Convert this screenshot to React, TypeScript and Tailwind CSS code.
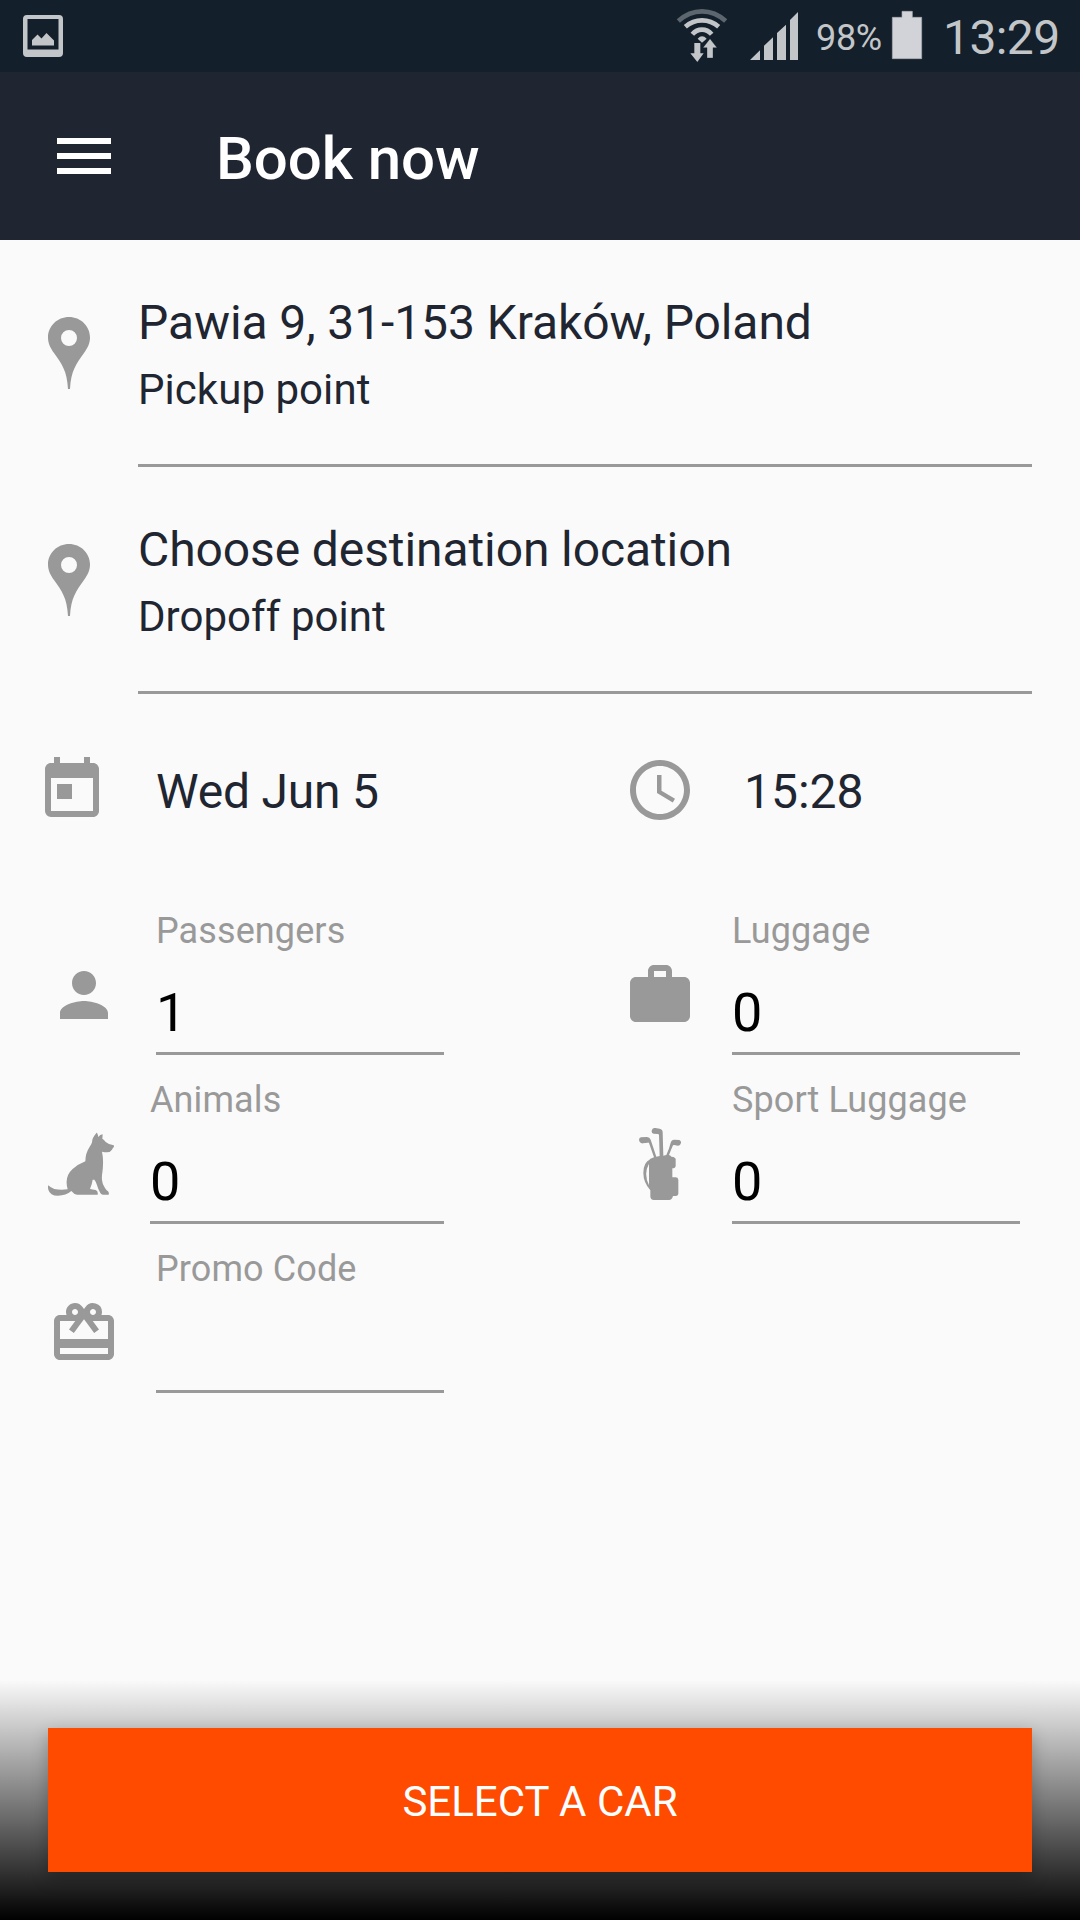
import type { ReactNode } from 'react';
import { MdMenu, MdPerson, MdRedeem, MdSchedule, MdToday, MdWork } from 'react-icons/md';

function ScreenshotIcon() {
  return (
    <svg width="42" height="72" viewBox="0 0 42 72" fill="#c3c6c9">
      <path
        fillRule="evenodd"
        d="M5 15h32a4 4 0 0 1 4 4v34a4 4 0 0 1-4 4H5a4 4 0 0 1-4-4V19a4 4 0 0 1 4-4zM5.500 19v30.500h31V19z"
      />
      <path d="M10 45.500v-5.500l5.500-5.500 4 4 5-5.500 7.500 7.500v5z" />
    </svg>
  );
}

function WifiIcon() {
  return (
    <svg width="52" height="72" viewBox="48 0 156 216">
      <g fill="none" stroke="#c3c6c9" strokeWidth="14">
        <path d="M55 63Q87 34 126 34t71 29" stroke="#5c666e" />
        <path d="M76 80Q98 61 126 61t50 19" />
        <path d="M97 103Q109 89 126 89t29 14" />
      </g>
      <g fill="#c3c6c9">
        <path d="M113 116q13-14 27 0l-14 12z" />
        <path d="M103 129h18v31h10l-19 26-21-26h12z" />
        <path d="M150 116l21 27h-12v31h-18v-31h-12z" stroke="#131f2a" strokeWidth="1" />
      </g>
    </svg>
  );
}

function SignalIcon() {
  return (
    <svg width="52" height="72" viewBox="264 0 156 216" fill="#c3c6c9">
      <path d="M270 180l30-29v29zM312 180v-43l27-25v68zM351 180V99l27-25v106zM390 180V60l24-24v144z" />
    </svg>
  );
}

function BatteryIcon() {
  return (
    <svg width="32" height="72" viewBox="693 0 96 216" fill="#d2d3d8" stroke="#a9adb2" strokeWidth="2">
      <path d="M726 34h31v18h28v124h-88V52h29z" />
    </svg>
  );
}

function PinIcon() {
  return (
    <svg width="42" height="72" viewBox="0 0 42 72" fill="#999">
      <path
        fillRule="evenodd"
        d="M21 0C9.400 0 0 9 0 20.500c0 6 2.500 10.500 6 15.500 8 11 13 18 14 36h2c1-18 6-25 14-36 3.500-5 6-9.500 6-15.500C42 9 32.600 0 21 0zm0 13a8 8 0 1 1 0 16 8 8 0 0 1 0-16z"
      />
    </svg>
  );
}

function DogIcon() {
  return (
    <svg width="66" height="72" viewBox="54 174 198 216" fill="#999">
      <path d="M201 188q3 6 4 13 5-7 13-8l-1 13q5 3 10 10 8 7 24 10 2 3 0 6-3 2-5 7-5 8-15 8-8 0-15-2 4 19 3 38 0 12-2 25-2 10-1 22 1 14 9 24 4 7 9 10 4 4 2 10h-17q-5 0-8-5-7-12-11-26-2-8-7-14h-5q-2 14-8 28 8 2 17 3 8 3 6 14h-62q-9-1-17-11-16 14-40 14-24 0-29-18-2-10 0-13 6 7 18 11 18 4 40 1-4-15-3-24 1-21 17-36 16-15 39-24 0-24 14-45 5-7 6-12 0-14 14-29z" />
    </svg>
  );
}

function GolfBagIcon() {
  return (
    <svg width="72" height="72" viewBox="72 174 216 216" fill="#999">
      <path d="M148 268l14-6-15-43q-1-2-4-1-8 1-14 2-8 1-11-6-3-10 5-12l16-1q10-1 13 8l17 51 10-2-2-63q0-3-4-3l-12-1q-7-1-6-9 2-9 11-8l13 2q9 2 9 11l2 70 9-2q9-20 13-37 3-10 12-9l14 1q6 2 5 9-2 9-10 8l-10-2q-4-1-5 3-6 14-11 27 6 2 7 5 8-1 13 6v22q-1 7-10 7v27h10q7 0 8 7v43q-2 7-9 6h-7q-3 12-12 12h-45q-11 0-11-11v-18q-21-24-21-52 0-32 21-41zM147 281q-17 30 0 65z" fillRule="evenodd" />
    </svg>
  );
}

function LocationRow({ title, caption }: { title: string; caption: string }) {
  return (
    <div className="flex h-[227px] pl-12 pr-12 text-[#1f2631]">
      <div className="mr-12 pt-[77px]">
        <PinIcon />
      </div>
      <div className="flex-1 border-b-[3px] border-[#999] pt-[55px]">
        <div className="text-5xl leading-[56px] tracking-[-0.1px]">{title}</div>
        <div className="mt-3.5 text-[42px] leading-[50px] tracking-[0.05px]">{caption}</div>
      </div>
    </div>
  );
}

interface FieldProps {
  icon: ReactNode;
  label: string;
  value?: string;
}

function Field({ icon, label, value = '' }: FieldProps) {
  return (
    <div className="flex h-[145px] gap-9">
      <div className="pt-[49px]">{icon}</div>
      <div className="flex-1 border-b-[3px] border-[#999]">
        <div className="text-4xl leading-[42px] tracking-[0.1px] text-[#999]">{label}</div>
        <div className="mt-[29px] h-16 text-[54px] leading-[64px] text-black">{value}</div>
      </div>
    </div>
  );
}

export default function App() {
  return (
    <div className="flex h-[1920px] w-[1080px] flex-col overflow-hidden bg-[#fafafa] font-['Roboto',sans-serif]">
      {/* Status bar */}
      <div className="flex h-[72px] shrink-0 items-start bg-[#131f2a] pl-[22px] pr-[21px] text-[#c3c6c9]">
        <ScreenshotIcon />
        <div className="ml-auto flex">
          <WifiIcon />
          <div className="ml-5">
            <SignalIcon />
          </div>
          <div className="ml-4 w-[75px] pt-[17px] text-4xl leading-[42px] tracking-[-0.3px]">98%</div>
          <BatteryIcon />
          <div className="ml-5 w-[116px] pt-2.5 text-5xl leading-[56px] tracking-[-0.6px]">13:29</div>
        </div>
      </div>

      {/* Toolbar */}
      <header className="flex h-[168px] shrink-0 items-start bg-[#1f2631] pl-12 text-white">
        <MdMenu className="mt-12 size-[72px]" />
        <h1 className="ml-24 mt-[52px] text-6xl font-medium leading-[70px] tracking-[-0.1px]">Book now</h1>
      </header>

      <LocationRow title="Pawia 9, 31-153 Kraków, Poland" caption="Pickup point" />
      <LocationRow title="Choose destination location" caption="Dropoff point" />

      {/* Date and time */}
      <div className="flex pt-[60px] text-5xl leading-[56px] text-[#1f2631]">
        <div className="flex w-[588px] gap-12 pl-9">
          <MdToday className="size-[72px] text-[#999]" />
          <div className="pt-2.5 tracking-[-0.2px]">Wed Jun 5</div>
        </div>
        <div className="flex gap-12 pl-9">
          <MdSchedule className="size-[72px] text-[#999]" />
          <div className="pt-2.5">15:28</div>
        </div>
      </div>

      <div className="mt-[84px] grid grid-cols-[396px_396px] gap-x-[180px] gap-y-6 pl-12">
        <Field icon={<MdPerson className="size-[72px] text-[#999]" />} label="Passengers" value="1" />
        <Field icon={<MdWork className="size-[72px] text-[#999]" />} label="Luggage" value="0" />
        <Field icon={<DogIcon />} label="Animals" value="0" />
        <Field icon={<GolfBagIcon />} label="Sport Luggage" value="0" />
        <Field icon={<MdRedeem className="size-[72px] text-[#999]" />} label="Promo Code" />
      </div>

      {/* Bottom action */}
      <div className="mt-auto h-60 bg-linear-to-b from-black/0 to-black px-12 pt-12">
        <button className="h-36 w-full bg-[#ff4b00] pt-1 text-[42px] leading-[50px] text-white shadow-[0_6px_16px_rgba(0,0,0,0.26)]">
          SELECT A CAR
        </button>
      </div>
    </div>
  );
}
